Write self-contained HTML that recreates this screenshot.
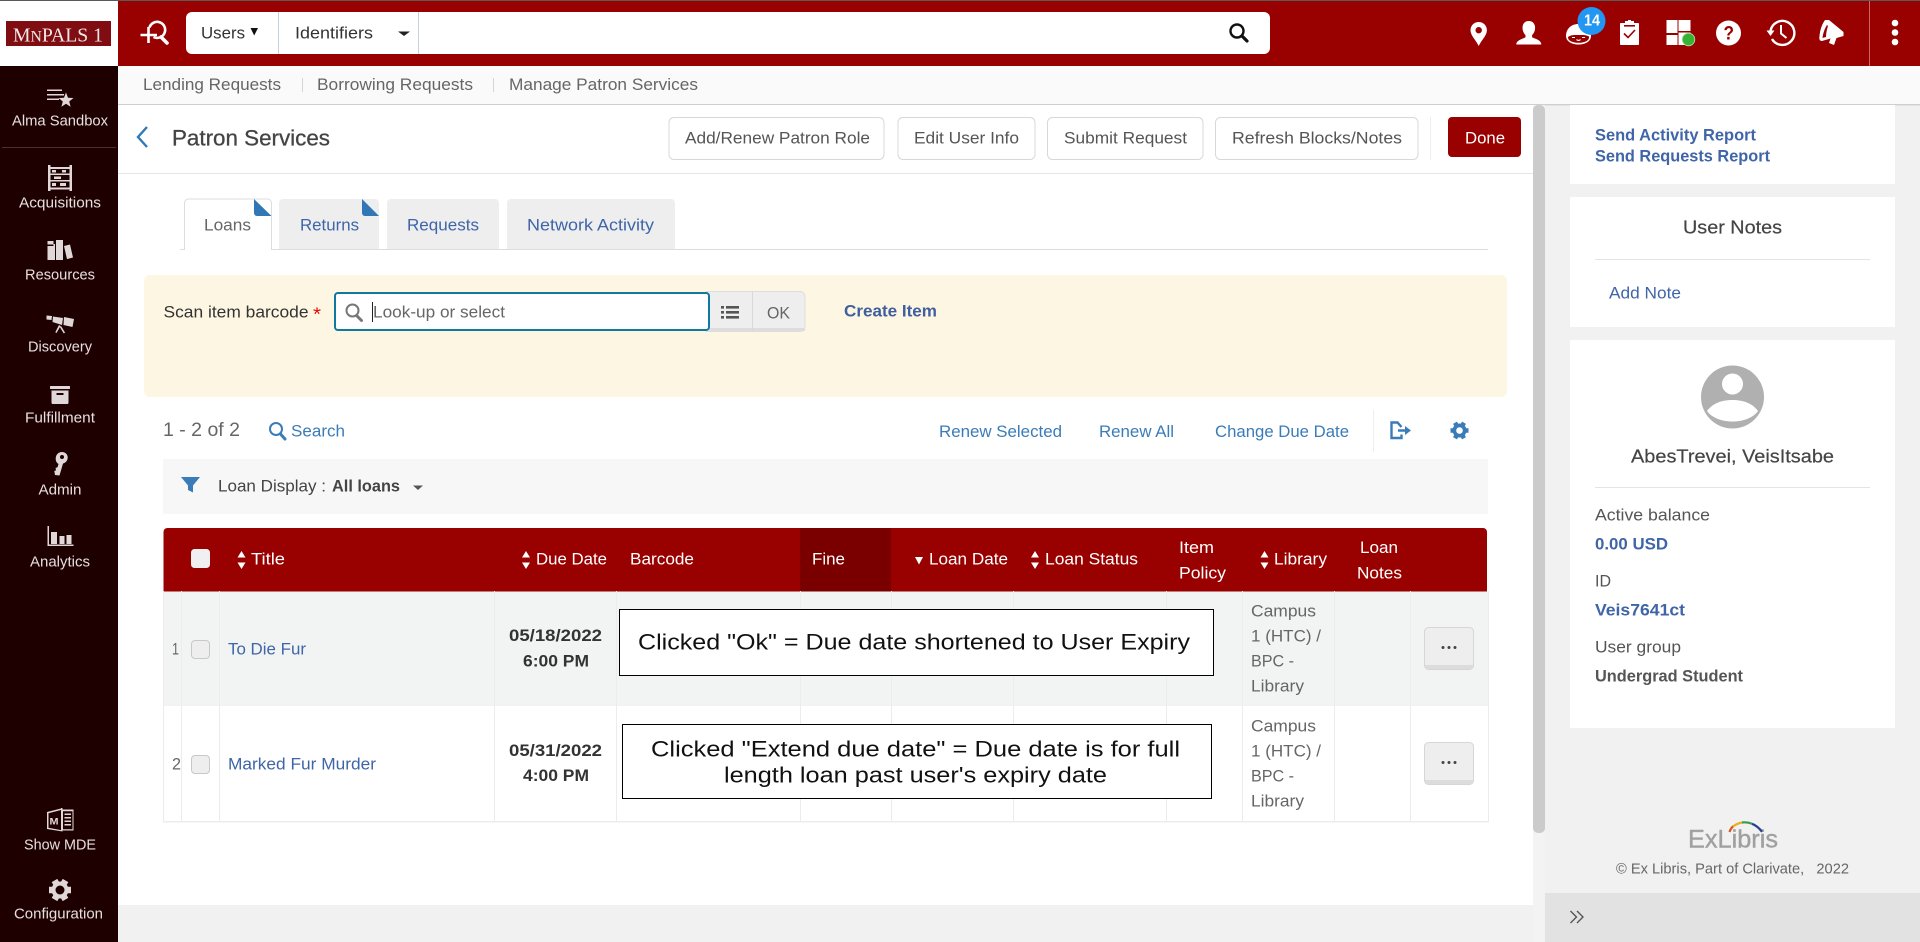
<!DOCTYPE html>
<html lang="en">
<head>
<meta charset="utf-8">
<title>Patron Services</title>
<style>
html,body{margin:0;padding:0;width:1920px;height:942px;overflow:hidden;background:#fff}
svg{display:block;position:absolute;left:0;top:0}
text{font-family:"Liberation Sans",Arial,sans-serif;font-size:17px;white-space:pre;transform:translateY(-.5px)}
.nav{fill:#666;font-size:17px}
.side{fill:#e6dfdf;font-size:15px;text-anchor:start}
.lnk{fill:#3f65a8}
.blu{fill:#3a7cb8}
.btn{fill:#555}
.hd{fill:#fff}
.b{font-weight:bold}
.cell{fill:#666}
.note{fill:#111;font-size:22px}
.ic{fill:#e0d8d8}
</style>
</head>
<body>
<svg width="1920" height="942" viewBox="0 0 1920 942" xmlns="http://www.w3.org/2000/svg">
<!-- base panels -->
<rect width="1920" height="942" fill="#f1f1f1"/>
<rect x="0" y="0" width="1920" height="66" fill="#990000"/>
<rect x="0" y="0" width="1920" height="1" fill="#5a5a5a"/>
<rect x="0" y="1" width="118" height="65" fill="#fff"/>
<rect x="6" y="21" width="105" height="25" fill="#7f0d12"/>
<text x="13" y="42" textLength="90" lengthAdjust="spacingAndGlyphs" style="font-family:'Liberation Serif',serif;font-size:20px;fill:#f3e9e9">M<tspan style="font-size:16px">N</tspan>PALS 1</text>
<rect x="0" y="66" width="118" height="876" fill="#1f0000"/>
<rect x="118" y="66" width="1802" height="38" fill="#fafafa"/>
<rect x="118" y="104" width="1802" height="1.4" fill="#cfcfcf"/>
<rect x="118" y="105" width="1415" height="800" fill="#fff"/>
<rect x="118" y="173" width="1415" height="1" fill="#e4e4e4"/>
<rect x="1533" y="105" width="12" height="837" fill="#f3f3f3"/>
<rect x="1533" y="105" width="12" height="728" rx="5" fill="#cbcbcb"/>
<rect x="1545" y="893" width="375" height="49" fill="#e2e2e2"/>

<!-- top bar -->
<g fill="none" stroke="#fff" stroke-width="2.600">
<path d="M140.500 35H157M148.500 27V43"/>
<path d="M149.500 27.500A8 8 0 1 1 153.500 37"/>
<path d="M161 37L167 43" stroke-width="3.600" stroke-linecap="round"/>
</g>
<rect x="186" y="12" width="1084" height="42" rx="6" fill="#fff"/>
<rect x="278" y="12" width="1" height="42" fill="#bdd4e4"/>
<rect x="418" y="12" width="1" height="42" fill="#bdd4e4"/>
<text x="201" y="39" textLength="44" lengthAdjust="spacingAndGlyphs" fill="#333">Users</text>
<path d="M250.500 28H258L254.200 35.500Z" fill="#111"/>
<text x="295" y="39" textLength="78" lengthAdjust="spacingAndGlyphs" fill="#333">Identifiers</text>
<path d="M398 31.500H410L404 36Z" fill="#222"/>
<g fill="none" stroke="#111"><circle cx="1237" cy="31" r="6.500" stroke-width="2.400"/><path d="M1242 36L1247 41" stroke-width="3.200" stroke-linecap="round"/></g>

<!-- top right icons -->
<path fill-rule="evenodd" d="M1478.700 22c-4.700 0-8.200 3.700-8.200 8.200 0 5.500 5.400 9.600 8.200 15.800 2.800-6.200 8.200-10.300 8.200-15.800 0-4.500-3.500-8.200-8.200-8.200zm0 5a3.200 3.200 0 1 1 0 6.400 3.200 3.200 0 0 1 0-6.400z" fill="#fff"/>
<path d="M1528.700 21c-4 0-6.200 3-6.200 6.800 0 3.200 1.300 5.700 3 7.300v2.200c-2.300 1.400-9.200 2.600-9.200 7.200h25c0-4.600-6.900-5.800-9.200-7.200v-2.200c1.700-1.600 3-4.100 3-7.300 0-3.800-2.200-6.800-6.400-6.800z" fill="#fff"/>
<path d="M1566 36c0-7 5-12 12.500-12s12.500 5 12.500 12c0 5-5 8.500-12.500 8.500s-12.500-3.500-12.500-8.500z" fill="#fff"/>
<path d="M1568.500 36.500c2-1 4-1.500 6-1.500h8c3 0 4.500.5 6.500 1.500v1c0 3-4 5.300-10.500 5.300s-10.500-2.300-10.500-5.300z" fill="#990000"/>
<path d="M1572 37.500h3M1582 37.500h3M1576.500 39.500c1 1.200 3 1.200 4 0" stroke="#fff" stroke-width="1.100" fill="none"/>
<circle cx="1591.500" cy="21" r="14" fill="#2196f3"/>
<text x="1584" y="26" textLength="16" lengthAdjust="spacingAndGlyphs" class="b" fill="#fff" style="font-size:15.500px">14</text>
<path d="M1621 23h4v-2h3v-1h3v1h3v2h4c.7 0 1 .4 1 1v20c0 .7-.4 1-1 1h-17c-.7 0-1-.4-1-1V24c0-.7.4-1 1-1z" fill="#fff"/>
<rect x="1624" y="25" width="11" height="1.600" fill="#990000"/>
<path d="M1624 33.500l4 4 7-7.500" fill="none" stroke="#990000" stroke-width="1.600"/>
<g fill="#fff"><rect x="1666.500" y="20" width="11" height="13"/><rect x="1678.500" y="20" width="12" height="11"/><rect x="1666.500" y="35" width="11" height="10"/><rect x="1678.500" y="32.500" width="12" height="12.500"/></g>
<circle cx="1688.500" cy="39.500" r="6.300" fill="#36b336" stroke="#bda" stroke-width=".8"/>
<circle cx="1728.500" cy="33" r="12.500" fill="#fff"/>
<text x="1723.500" y="40" textLength="10.500" lengthAdjust="spacingAndGlyphs" class="b" fill="#990000" style="font-size:19px">?</text>
<g fill="none" stroke="#fff" stroke-width="2.400">
<path d="M1772 39a12 12 0 1 0-1.500-8"/>
<path d="M1781 25v8.500l5.500 4.500" stroke-width="2"/>
</g>
<path d="M1766.500 30.500h8l-4 5.500z" fill="#fff"/>
<path fill-rule="evenodd" d="M1825 20L1829 20L1843.500 32L1843.500 36L1836.500 38L1834 45L1829 43L1830.500 38.500L1822 41C1819.500 41 1819 39 1819.500 36C1820 30 1822 24 1825 20ZM1827 25C1825 28 1823 33 1822.500 38L1826 37C1826 33 1827 29 1828 26Z" fill="#fff"/>
<rect x="1869" y="1" width="1" height="65" fill="#cc6666"/>
<g fill="#fff"><circle cx="1895" cy="23" r="3.300"/><circle cx="1895" cy="32.500" r="3.300"/><circle cx="1895" cy="42" r="3.300"/></g>

<!-- sub nav -->
<text x="143" y="90.500" textLength="138" lengthAdjust="spacingAndGlyphs" class="nav">Lending Requests</text>
<rect x="302" y="78" width="1" height="14" fill="#d5d5d5"/>
<text x="317" y="90.500" textLength="156" lengthAdjust="spacingAndGlyphs" class="nav">Borrowing Requests</text>
<rect x="493" y="78" width="1" height="14" fill="#d5d5d5"/>
<text x="509" y="90.500" textLength="189" lengthAdjust="spacingAndGlyphs" class="nav">Manage Patron Services</text>

<!-- sidebar -->
<g class="ic">
<path d="M47 89.500h15v1.500H47zM47 94h17v1.500H47zM47 98.500h12v1.500H47z"/>
<path d="M66 92.500l2 5.200 5.500.3-4.300 3.500 1.400 5.300-4.600-3-4.600 3 1.400-5.300-4.300-3.500 5.500-.3z"/>
<path fill-rule="evenodd" d="M48 165h2.500v2H69.500v-2H72v26h-2.500v-1.500H50.500V191H48zm2.500 4v4.500h19V169zm0 6v5h19v-5zm0 6.500v6h19v-6z"/>
<path d="M52 170h4v2.500h-4zM62 170h4v2.500h-4zM54 176.500h7v2.500h-7zM52 183h4v3h-4zM60 183h6v3h-6z"/>
<path d="M47.500 246h6v-2h1.500v16h-7.500zM47.500 241h6v3.500h-6zM56 240h7v20h-7zM64 246l6-1.500 3 13-6 1.600z"/>
<path d="M46.500 315.500L52 316L51.500 320L46.500 319.500ZM53 316.500L63 318L62 325L52.500 322ZM64 317L74 319L72.500 327L63.500 325Z"/>
<path d="M59 325l1.500 1-4 7-1.200-.8zM61 326l4 6.500-1.200 1-4-6.500z"/>
<rect x="50" y="386" width="20" height="3" rx=".6"/>
<path fill-rule="evenodd" d="M51.500 390.500h17v12c0 .8-.4 1.500-1.200 1.500H52.700c-.8 0-1.200-.7-1.200-1.500zm5 2.500v2h7v-2z"/>
<path fill-rule="evenodd" d="M62 452c3.500 0 5.700 2.500 5.700 5.500S65.500 463 63 463.500l-3.500 12-4.500-.5-.7-4 1.800-.7-.6-2.300 2-.7 1-3.300c-2-1.300-2.800-3-2.800-5C55.700 454.500 58.500 452 62 452zm0 3a2 2 0 1 0 0 4 2 2 0 0 0 0-4z"/>
<path d="M47.500 526h1.500v18.500h24.500v1.500H47.500zM51 532h6v12h-6zM59.500 536h5v8h-5zM66.500 535h5v9h-5z"/>
<path fill-rule="evenodd" d="M47 812l14 -3.500V808h1.500V809.500h11v21H62.500v1L47 829zm1.500 1.200v14.600l12.500 2.300V810zm14.500-2v18h9.500v-18z"/>
<text x="49.500" y="824.800" style="font-size:9px;font-weight:bold;fill:#e0d8d8" textLength="9" lengthAdjust="spacingAndGlyphs">M</text>
<path d="M64.500 813.500h6.500v1.500h-6.500zM64.500 817h6.500v1.500h-6.500zM64.500 820.500h6.500v1.500h-6.500zM64.500 824h6.500v1.500h-6.500z"/>
</g>
<g stroke="#e0d8d8" stroke-width="6.500" fill="none">
<path d="M49 890H71M54.500 880.500L65.500 899.500M54.500 899.500L65.500 880.500"/>
</g>
<circle cx="60" cy="890" r="8.500" fill="#e0d8d8"/>
<circle cx="60" cy="890" r="4.500" fill="#1f0000"/>
<text x="12" y="126" textLength="96" lengthAdjust="spacingAndGlyphs" class="side">Alma Sandbox</text>
<rect x="2" y="147" width="114" height="1" fill="#4a3030"/>
<text x="19" y="208" textLength="82" lengthAdjust="spacingAndGlyphs" class="side">Acquisitions</text>
<text x="25" y="280" textLength="70" lengthAdjust="spacingAndGlyphs" class="side">Resources</text>
<text x="28" y="352" textLength="64" lengthAdjust="spacingAndGlyphs" class="side">Discovery</text>
<text x="25" y="423" textLength="70" lengthAdjust="spacingAndGlyphs" class="side">Fulfillment</text>
<text x="38.500" y="495" textLength="43" lengthAdjust="spacingAndGlyphs" class="side">Admin</text>
<text x="30" y="567" textLength="60" lengthAdjust="spacingAndGlyphs" class="side">Analytics</text>
<text x="24" y="850" textLength="72" lengthAdjust="spacingAndGlyphs" class="side">Show MDE</text>
<text x="14" y="919" textLength="89" lengthAdjust="spacingAndGlyphs" class="side">Configuration</text>

<!-- header -->
<path d="M147 127l-9 10 9 10" fill="none" stroke="#2f7ab8" stroke-width="2.400"/>
<text x="172" y="146" textLength="158" lengthAdjust="spacingAndGlyphs" style="font-size:22.500px;fill:#444;stroke:#444;stroke-width:.3">Patron Services</text>
<g fill="#fff" stroke="#d8d8d8"><rect x="669" y="117.500" width="215" height="42" rx="5"/><rect x="898" y="117.500" width="137" height="42" rx="5"/><rect x="1047.500" y="117.500" width="155.500" height="42" rx="5"/><rect x="1215.500" y="117.500" width="202.500" height="42" rx="5"/></g>
<text x="685" y="144" textLength="185" lengthAdjust="spacingAndGlyphs" class="btn">Add/Renew Patron Role</text>
<text x="914" y="144" textLength="105" lengthAdjust="spacingAndGlyphs" class="btn">Edit User Info</text>
<text x="1064" y="144" textLength="123" lengthAdjust="spacingAndGlyphs" class="btn">Submit Request</text>
<text x="1232" y="144" textLength="170" lengthAdjust="spacingAndGlyphs" class="btn">Refresh Blocks/Notes</text>
<rect x="1430" y="117" width="1" height="43" fill="#eee"/>
<rect x="1448" y="117" width="73" height="40" rx="4" fill="#990000"/>
<text x="1465" y="144" textLength="40" lengthAdjust="spacingAndGlyphs" fill="#fff">Done</text>

<!-- tabs -->
<rect x="180" y="249" width="1308" height="1" fill="#ddd"/>
<path d="M184.500 250V203a4 4 0 0 1 4-4H267a4 4 0 0 1 4.500 4V250" fill="#fff" stroke="#ddd"/>
<rect x="185" y="249" width="86" height="2" fill="#fff"/>
<path d="M254 199L271.500 216H257a3 3 0 0 1-3-3z" fill="#3277b5"/>
<path d="M279 203a4 4 0 0 1 4-4H375a4 4 0 0 1 4 4v46H279z" fill="#eee"/>
<path d="M362 199L379 216H365a3 3 0 0 1-3-3z" fill="#3277b5"/>
<path d="M387 203a4 4 0 0 1 4-4H495a4 4 0 0 1 4 4v46H387z" fill="#eee"/>
<path d="M507 203a4 4 0 0 1 4-4H671a4 4 0 0 1 4 4v46H507z" fill="#eee"/>
<text x="204" y="231" textLength="47" lengthAdjust="spacingAndGlyphs" fill="#666">Loans</text>
<text x="300" y="231" textLength="59" lengthAdjust="spacingAndGlyphs" class="lnk">Returns</text>
<text x="407" y="231" textLength="72" lengthAdjust="spacingAndGlyphs" class="lnk">Requests</text>
<text x="527" y="231" textLength="127" lengthAdjust="spacingAndGlyphs" class="lnk">Network Activity</text>

<!-- scan panel -->
<rect x="144" y="275" width="1363" height="122" rx="6" fill="#fdf6e3"/>
<text x="163.500" y="318" textLength="145" lengthAdjust="spacingAndGlyphs" fill="#333">Scan item barcode</text>
<text x="313" y="321" textLength="8" lengthAdjust="spacingAndGlyphs" fill="#e00" style="font-size:18px">*</text>
<path d="M706 291.500h94a5 5 0 0 1 5 5v30a5 5 0 0 1-5 5h-94z" fill="#eee" stroke="#ddd"/>
<rect x="709" y="328" width="96" height="3" fill="#ddd"/>
<rect x="752" y="292" width="1" height="39" fill="#d8d8d8"/>
<rect x="335" y="293" width="374" height="37" rx="3" fill="#fff" stroke="#107a9e" stroke-width="2"/>
<g fill="none" stroke="#777"><circle cx="352.500" cy="310.500" r="6" stroke-width="2"/><path d="M357 316l4.500 4.500" stroke-width="3" stroke-linecap="round"/></g>
<rect x="372" y="302" width="1" height="20" fill="#222"/>
<text x="373" y="318" textLength="132" lengthAdjust="spacingAndGlyphs" fill="#666">Look-up or select</text>
<g fill="#555"><rect x="721" y="306" width="3" height="2.600"/><rect x="726" y="306" width="13" height="2.600"/><rect x="721" y="311" width="3" height="2.600"/><rect x="726" y="311" width="13" height="2.600"/><rect x="721" y="316" width="3" height="2.600"/><rect x="726" y="316" width="13" height="2.600"/></g>
<text x="767" y="319" textLength="23" lengthAdjust="spacingAndGlyphs" fill="#666">OK</text>
<text x="844" y="317" textLength="93" lengthAdjust="spacingAndGlyphs" class="b" fill="#3f5f9f">Create Item</text>

<!-- list toolbar -->
<text x="163" y="436.500" textLength="77" lengthAdjust="spacingAndGlyphs" fill="#666" style="font-size:19px">1 - 2 of 2</text>
<g fill="none" stroke="#3a7cb8"><circle cx="276" cy="429" r="6" stroke-width="2"/><path d="M280.500 434l4.500 5" stroke-width="3" stroke-linecap="round"/></g>
<text x="291" y="437" textLength="54" lengthAdjust="spacingAndGlyphs" class="blu">Search</text>
<text x="939" y="437.500" textLength="123" lengthAdjust="spacingAndGlyphs" class="blu">Renew Selected</text>
<text x="1099" y="437.500" textLength="75" lengthAdjust="spacingAndGlyphs" class="blu">Renew All</text>
<text x="1215" y="437.500" textLength="134" lengthAdjust="spacingAndGlyphs" class="blu">Change Due Date</text>
<rect x="1373" y="410" width="1" height="42" fill="#eee"/>
<path d="M1401.500 427L1397.500 422.500H1391.500V438H1401.500V434.500" fill="none" stroke="#3a7cb8" stroke-width="2.400"/>
<path d="M1398 429.300h7v-3.300l6 4.500-6 4.500v-3.300h-7z" fill="#3a7cb8"/>
<g stroke="#3a7cb8" stroke-width="4.500" fill="none"><path d="M1450.500 430.500H1468.500M1455 422.700L1464 438.300M1455 438.300L1464 422.700"/></g>
<circle cx="1459.500" cy="430.500" r="7" fill="#3a7cb8"/>
<circle cx="1459.500" cy="430.500" r="3.300" fill="#fff"/>

<rect x="163" y="459" width="1325" height="55" fill="#f7f7f7"/>
<path d="M181 477h19l-7 8.500v7l-5-2.500v-4.500z" fill="#3a7cb8"/>
<text x="218" y="492" textLength="108" lengthAdjust="spacingAndGlyphs" fill="#444">Loan Display :</text>
<text x="332" y="492" textLength="68" lengthAdjust="spacingAndGlyphs" class="b" fill="#444">All loans</text>
<path d="M413 485.500h10l-5 4.500z" fill="#555"/>

<!-- table -->
<path d="M163.500 532a4 4 0 0 1 4-4H1483a4 4 0 0 1 4 4v59.500H163.500z" fill="#990000"/>
<rect x="800" y="528" width="91" height="63.500" fill="#7a0000"/>
<rect x="191" y="549" width="19" height="19" rx="3.500" fill="#f0f0f0"/>
<g fill="#fff">
<path d="M241.500 551l4 6.500h-8zM241.500 569l4-6.500h-8z"/>
<path d="M526 551l4 6.500h-8zM526 569l4-6.500h-8z"/>
<path d="M915 557h8l-4 7.500z"/>
<path d="M1035 551l4 6.500h-8zM1035 569l4-6.500h-8z"/>
<path d="M1264.500 551l4 6.500h-8zM1264.500 569l4-6.500h-8z"/>
</g>
<text x="251" y="565" textLength="34" lengthAdjust="spacingAndGlyphs" class="hd">Title</text>
<text x="536" y="565" textLength="71" lengthAdjust="spacingAndGlyphs" class="hd">Due Date</text>
<text x="630" y="565" textLength="64" lengthAdjust="spacingAndGlyphs" class="hd">Barcode</text>
<text x="812" y="565" textLength="33" lengthAdjust="spacingAndGlyphs" class="hd">Fine</text>
<text x="929" y="565" textLength="79" lengthAdjust="spacingAndGlyphs" class="hd">Loan Date</text>
<text x="1045" y="565" textLength="93" lengthAdjust="spacingAndGlyphs" class="hd">Loan Status</text>
<text x="1179" y="553.500" textLength="35" lengthAdjust="spacingAndGlyphs" class="hd">Item</text>
<text x="1179" y="579" textLength="47" lengthAdjust="spacingAndGlyphs" class="hd">Policy</text>
<text x="1274" y="565" textLength="53" lengthAdjust="spacingAndGlyphs" class="hd">Library</text>
<text x="1360" y="553.500" textLength="38" lengthAdjust="spacingAndGlyphs" class="hd">Loan</text>
<text x="1357" y="579" textLength="45" lengthAdjust="spacingAndGlyphs" class="hd">Notes</text>

<rect x="163.500" y="591.500" width="1324.500" height="114.500" fill="#f2f4f4"/>
<rect x="163.500" y="706" width="1324.500" height="115" fill="#fff"/>
<g fill="#ececec">
<rect x="163" y="591" width="1" height="231"/><rect x="181" y="591" width="1" height="231"/><rect x="219" y="591" width="1" height="231"/><rect x="494" y="591" width="1" height="231"/><rect x="616" y="591" width="1" height="231"/><rect x="800" y="591" width="1" height="231"/><rect x="891" y="591" width="1" height="231"/><rect x="1013" y="591" width="1" height="231"/><rect x="1166" y="591" width="1" height="231"/><rect x="1242" y="591" width="1" height="231"/><rect x="1334" y="591" width="1" height="231"/><rect x="1410" y="591" width="1" height="231"/><rect x="1488" y="591" width="1" height="231"/>
<rect x="163" y="821" width="1326" height="1.500"/>
</g>
<text x="172" y="655" textLength="7" lengthAdjust="spacingAndGlyphs" class="cell">1</text>
<text x="172" y="770" textLength="9" lengthAdjust="spacingAndGlyphs" class="cell">2</text>
<rect x="191.500" y="640.500" width="18" height="18" rx="3.500" fill="#eee" stroke="#c8c8c8"/>
<rect x="191.500" y="755.500" width="18" height="18" rx="3.500" fill="#eee" stroke="#c8c8c8"/>
<text x="228" y="655" textLength="78" lengthAdjust="spacingAndGlyphs" class="lnk">To Die Fur</text>
<text x="228" y="770" textLength="148" lengthAdjust="spacingAndGlyphs" class="lnk">Marked Fur Murder</text>
<text x="509" y="641.500" textLength="93" lengthAdjust="spacingAndGlyphs" class="b" fill="#333">05/18/2022</text>
<text x="523" y="667" textLength="66" lengthAdjust="spacingAndGlyphs" class="b" fill="#333">6:00 PM</text>
<text x="509" y="756.500" textLength="93" lengthAdjust="spacingAndGlyphs" class="b" fill="#333">05/31/2022</text>
<text x="523" y="781.500" textLength="66" lengthAdjust="spacingAndGlyphs" class="b" fill="#333">4:00 PM</text>

<rect x="619.500" y="609.500" width="594" height="66" fill="#fff" stroke="#000"/>
<text x="638" y="650" textLength="552" lengthAdjust="spacingAndGlyphs" class="note">Clicked "Ok" = Due date shortened to User Expiry</text>
<rect x="622.500" y="724.500" width="589" height="74" fill="#fff" stroke="#000"/>
<text x="651" y="757" textLength="529" lengthAdjust="spacingAndGlyphs" class="note">Clicked "Extend due date" = Due date is for full</text>
<text x="724" y="783" textLength="383" lengthAdjust="spacingAndGlyphs" class="note">length loan past user's expiry date</text>

<text x="1251" y="617" textLength="65" lengthAdjust="spacingAndGlyphs" class="cell">Campus</text>
<text x="1251" y="642" textLength="70" lengthAdjust="spacingAndGlyphs" class="cell">1 (HTC) /</text>
<text x="1251" y="667" textLength="43" lengthAdjust="spacingAndGlyphs" class="cell">BPC -</text>
<text x="1251" y="692" textLength="53" lengthAdjust="spacingAndGlyphs" class="cell">Library</text>
<text x="1251" y="732" textLength="65" lengthAdjust="spacingAndGlyphs" class="cell">Campus</text>
<text x="1251" y="757" textLength="70" lengthAdjust="spacingAndGlyphs" class="cell">1 (HTC) /</text>
<text x="1251" y="782" textLength="43" lengthAdjust="spacingAndGlyphs" class="cell">BPC -</text>
<text x="1251" y="807" textLength="53" lengthAdjust="spacingAndGlyphs" class="cell">Library</text>
<rect x="1424.500" y="627.500" width="49" height="42" rx="4" fill="#eee" stroke="#d6d6d6"/>
<rect x="1425" y="665" width="48" height="4" fill="#dcdcdc"/>
<rect x="1424.500" y="742.500" width="49" height="42" rx="4" fill="#eee" stroke="#d6d6d6"/>
<rect x="1425" y="780" width="48" height="4" fill="#dcdcdc"/>
<g fill="#444"><circle cx="1443" cy="647.500" r="1.500"/><circle cx="1449" cy="647.500" r="1.500"/><circle cx="1455" cy="647.500" r="1.500"/><circle cx="1443" cy="762.500" r="1.500"/><circle cx="1449" cy="762.500" r="1.500"/><circle cx="1455" cy="762.500" r="1.500"/></g>

<!-- right panel -->
<rect x="1570" y="105" width="325" height="79" fill="#fff"/>
<rect x="1570" y="197" width="325" height="130" fill="#fff"/>
<rect x="1570" y="340" width="325" height="388" fill="#fff"/>
<text x="1595" y="141" textLength="161" lengthAdjust="spacingAndGlyphs" class="b lnk">Send Activity Report</text>
<text x="1595" y="162" textLength="175" lengthAdjust="spacingAndGlyphs" class="b lnk">Send Requests Report</text>
<text x="1683" y="234" textLength="99" lengthAdjust="spacingAndGlyphs" style="font-size:18.500px;fill:#444;stroke:#444;stroke-width:.2">User Notes</text>
<rect x="1595" y="259" width="275" height="1" fill="#e4e4e4"/>
<text x="1609" y="299" textLength="72" lengthAdjust="spacingAndGlyphs" class="lnk">Add Note</text>
<circle cx="1732.500" cy="397" r="31.500" fill="#b0b0b0"/>
<circle cx="1732.500" cy="384" r="10.500" fill="#fff"/>
<path d="M1707 411c6-8 15-11 25.500-11s19.500 3 25.500 11c-5 7-15 10.500-25.500 10.500s-20.500-3.500-25.500-10.500z" fill="#fff"/>
<text x="1631" y="463" textLength="203" lengthAdjust="spacingAndGlyphs" style="font-size:18.500px;fill:#444;stroke:#444;stroke-width:.2">AbesTrevei, VeisItsabe</text>
<rect x="1595" y="487" width="275" height="1" fill="#e4e4e4"/>
<text x="1595" y="521" textLength="115" lengthAdjust="spacingAndGlyphs" fill="#555">Active balance</text>
<text x="1595" y="550" textLength="73" lengthAdjust="spacingAndGlyphs" class="b lnk">0.00 USD</text>
<text x="1595" y="587" textLength="16" lengthAdjust="spacingAndGlyphs" fill="#555">ID</text>
<text x="1595" y="616" textLength="90" lengthAdjust="spacingAndGlyphs" class="b lnk">Veis7641ct</text>
<text x="1595" y="653" textLength="86" lengthAdjust="spacingAndGlyphs" fill="#555">User group</text>
<text x="1595" y="682" textLength="148" lengthAdjust="spacingAndGlyphs" class="b" fill="#555">Undergrad Student</text>

<!-- footer logo -->
<text x="1688" y="848" textLength="90" lengthAdjust="spacingAndGlyphs" style="font-size:25px;fill:#a0a0a0;stroke:#a0a0a0;stroke-width:.4">ExLibris</text>
<g fill="none" stroke-width="2.200">
<path d="M1729.500 832c1-3 2-4.500 4-6" stroke="#d9541e"/>
<path d="M1733 826.500c3-2.300 6-3.500 9-4" stroke="#e8b020"/>
<path d="M1742 822.500c4-.5 7 0 10 1.300" stroke="#3a9c4a"/>
<path d="M1752 823.800c4 1.500 7 4 10 8" stroke="#2a3f8f"/>
</g>
<text x="1616" y="874" textLength="233" lengthAdjust="spacingAndGlyphs" fill="#666" style="font-size:14.500px">© Ex Libris, Part of Clarivate,   2022</text>
<path d="M1570.500 911l6 6-6 6M1577 911l6 6-6 6" fill="none" stroke="#555" stroke-width="1.400"/>
</svg>
</body>
</html>
